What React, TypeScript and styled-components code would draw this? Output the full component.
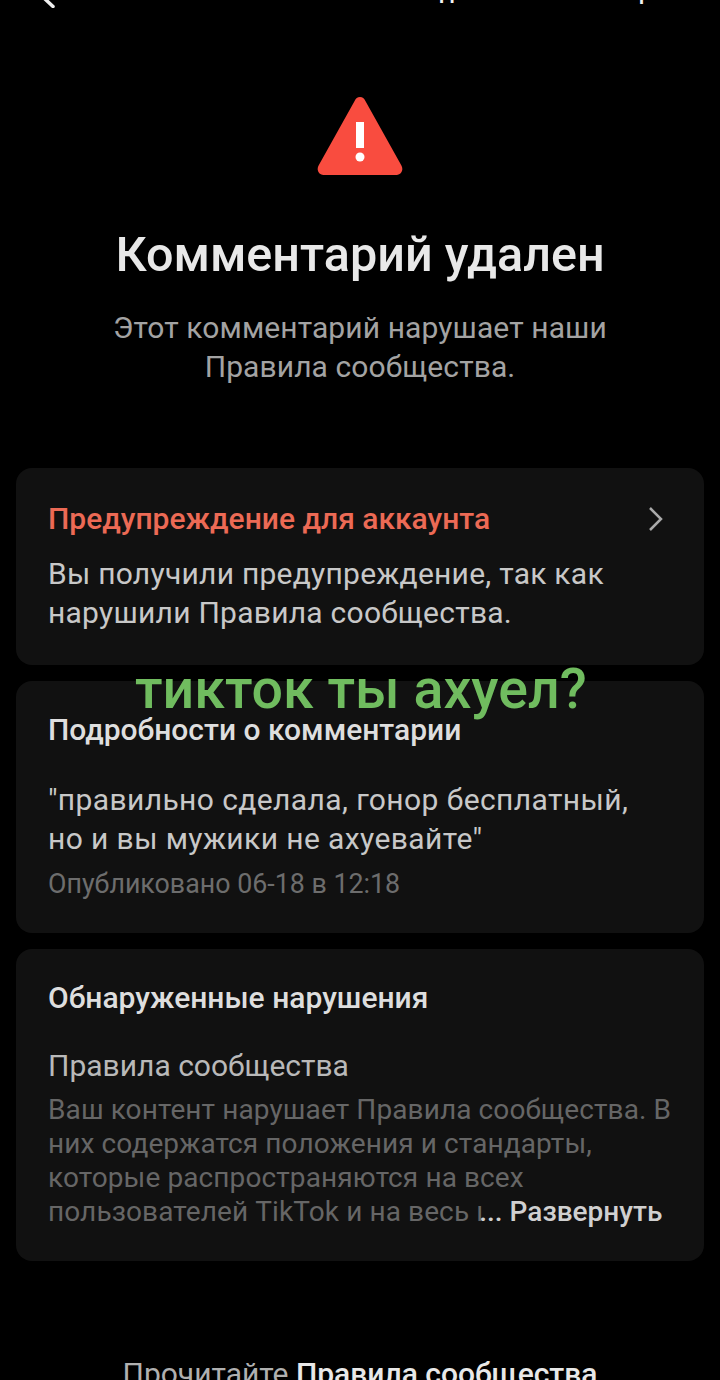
import React from "react";
import styled, { createGlobalStyle } from "styled-components";

const Global = createGlobalStyle`
  html, body { margin: 0; padding: 0; background: #000; }
  body { font-family: Roboto, "Noto Sans", "Liberation Sans", sans-serif; }
`;

const Page = styled.div`
  position: relative;
  width: 720px;
  height: 1380px;
  overflow: hidden;
  background: #000;
  color: #e6e6e6;
`;

const Header = styled.header`
  display: flex;
  align-items: flex-end;
  justify-content: space-between;
  height: 40px;
  margin-top: -32px;
  padding: 0 42px 0 36px;
`;

const HeaderTitle = styled.span`
  margin-bottom: -4px;
  font-size: 23px;
  line-height: 40px;
  font-weight: 500;
  color: #f2f2f2;
  white-space: nowrap;
`;

const Hero = styled.section`
  display: flex;
  flex-direction: column;
  align-items: center;
  padding-top: 89px;
`;

const WarningIcon = styled.svg`
  display: block;
  width: 86px;
  height: 78px;
`;

const Title = styled.h1`
  margin: 52px 0 0;
  font-size: 48.500px;
  line-height: 56px;
  font-weight: 500;
  color: #e8e8e8;
`;

const Lead = styled.p`
  margin: 25px 0 0;
  font-size: 30px;
  line-height: 39px;
  letter-spacing: 0.1px;
  text-align: center;
  color: #a3a3a3;
`;

const Cards = styled.div`
  display: flex;
  flex-direction: column;
  gap: 16px;
  margin: 82px 16px 0;
`;

const Card = styled.section<{ $h: number }>`
  height: ${(p) => p.$h}px;
  box-sizing: border-box;
  padding: 30px 32px 0;
  border-radius: 16px;
  background: #111;
`;

const CardHead = styled.div`
  display: flex;
  align-items: center;
  justify-content: space-between;
  padding: 2px 8px 0 0;
`;

const CardTitle = styled.h2<{ $warn?: boolean }>`
  margin: 0;
  font-size: 30px;
  line-height: 38px;
  font-weight: 500;
  color: ${(p) => (p.$warn ? "#ec6a55" : "#dedede")};
`;

const Chevron = styled.svg`
  width: 16px;
  height: 26px;
`;

const Body = styled.p<{ $top: number; $ls: number }>`
  margin: ${(p) => p.$top}px 0 0;
  font-size: 30px;
  line-height: 39px;
  letter-spacing: ${(p) => p.$ls}px;
  color: #c8c8c8;
  white-space: nowrap;
`;

const Meta = styled.p`
  margin: 9px 0 0;
  font-size: 26.800px;
  line-height: 34px;
  color: #6d6d6d;
`;

const Rule = styled.h3`
  margin: 30px 0 0;
  font-size: 30px;
  line-height: 38px;
  font-weight: 400;
  color: #b9b9b9;
`;

const RuleText = styled.p`
  margin: 8px 0 0;
  font-size: 28px;
  line-height: 34px;
  letter-spacing: 0.1px;
  color: #666;
  white-space: nowrap;
`;

const More = styled.b`
  margin-left: -4px;
  font-weight: 500;
  letter-spacing: 0;
  color: #d0d0d0;
`;

const Footer = styled.p`
  margin: 93px 0 0;
  font-size: 30px;
  line-height: 39px;
  text-align: center;
  color: #b0b0b0;
`;

const FooterLink = styled.b`
  font-weight: 500;
  color: #e8e8e8;
`;

const Overlay = styled.div`
  position: absolute;
  left: 135px;
  top: 658px;
  font-size: 55.500px;
  line-height: 64px;
  font-weight: 500;
  color: #70bc5f;
  white-space: nowrap;
`;

export default function App() {
  return (
    <Page>
      <Global />
      <Header>
        <svg width="20" height="40" viewBox="0 0 20 40" fill="none" stroke="#eee" strokeWidth="3.5" strokeLinecap="round">
          <path d="M18 21 L9 31 L17 38.500" />
        </svg>
        <HeaderTitle>Сведения о комментарии</HeaderTitle>
      </Header>
      <Hero>
        <WarningIcon viewBox="0 0 86 78">
          <path
            d="M43 0c2.6 0 4.2 1.6 5.4 3.9l36 64.6c2.2 4.300 0.4 8.900-4.800 9.500H6.400c-5.200-0.600-7-5.200-4.800-9.500l36-64.600C38.800 1.600 40.400 0 43 0z"
            fill="#f94c3f"
          />
          <rect x="39" y="25" width="8" height="26" fill="#fff" />
          <circle cx="43" cy="60" r="4.500" fill="#fff" />
        </WarningIcon>
        <Title>Комментарий удален</Title>
        <Lead>
          Этот комментарий нарушает наши
          <br />
          Правила сообщества.
        </Lead>
      </Hero>
      <Cards>
        <Card $h={197}>
          <CardHead>
            <CardTitle $warn>Предупреждение для аккаунта</CardTitle>
            <Chevron viewBox="0 0 16 26" fill="none" stroke="#aaa" strokeWidth="2.500">
              <path d="M2 2 L13 13 L2 24" />
            </Chevron>
          </CardHead>
          <Body $top={16} $ls={0.25}>
            Вы получили предупреждение, так как
            <br />
            нарушили Правила сообщества.
          </Body>
        </Card>
        <Card $h={252}>
          <CardTitle>Подробности о комментарии</CardTitle>
          <Body $top={31} $ls={0.4}>
            "правильно сделала, гонор бесплатный,
            <br />
            но и вы мужики не ахуевайте"
          </Body>
          <Meta>Опубликовано 06-18 в 12:18</Meta>
        </Card>
        <Card $h={312}>
          <CardTitle>Обнаруженные нарушения</CardTitle>
          <Rule>Правила сообщества</Rule>
          <RuleText>
            Ваш контент нарушает Правила сообщества. В
            <br />
            них содержатся положения и стандарты,
            <br />
            которые распространяются на всех
            <br />
            пользователей TikTok и на весь ı<More>... Развернуть</More>
          </RuleText>
        </Card>
      </Cards>
      <Footer>
        Прочитайте <FooterLink>Правила сообщества</FooterLink>
      </Footer>
      <Overlay>тикток ты ахуел?</Overlay>
    </Page>
  );
}
